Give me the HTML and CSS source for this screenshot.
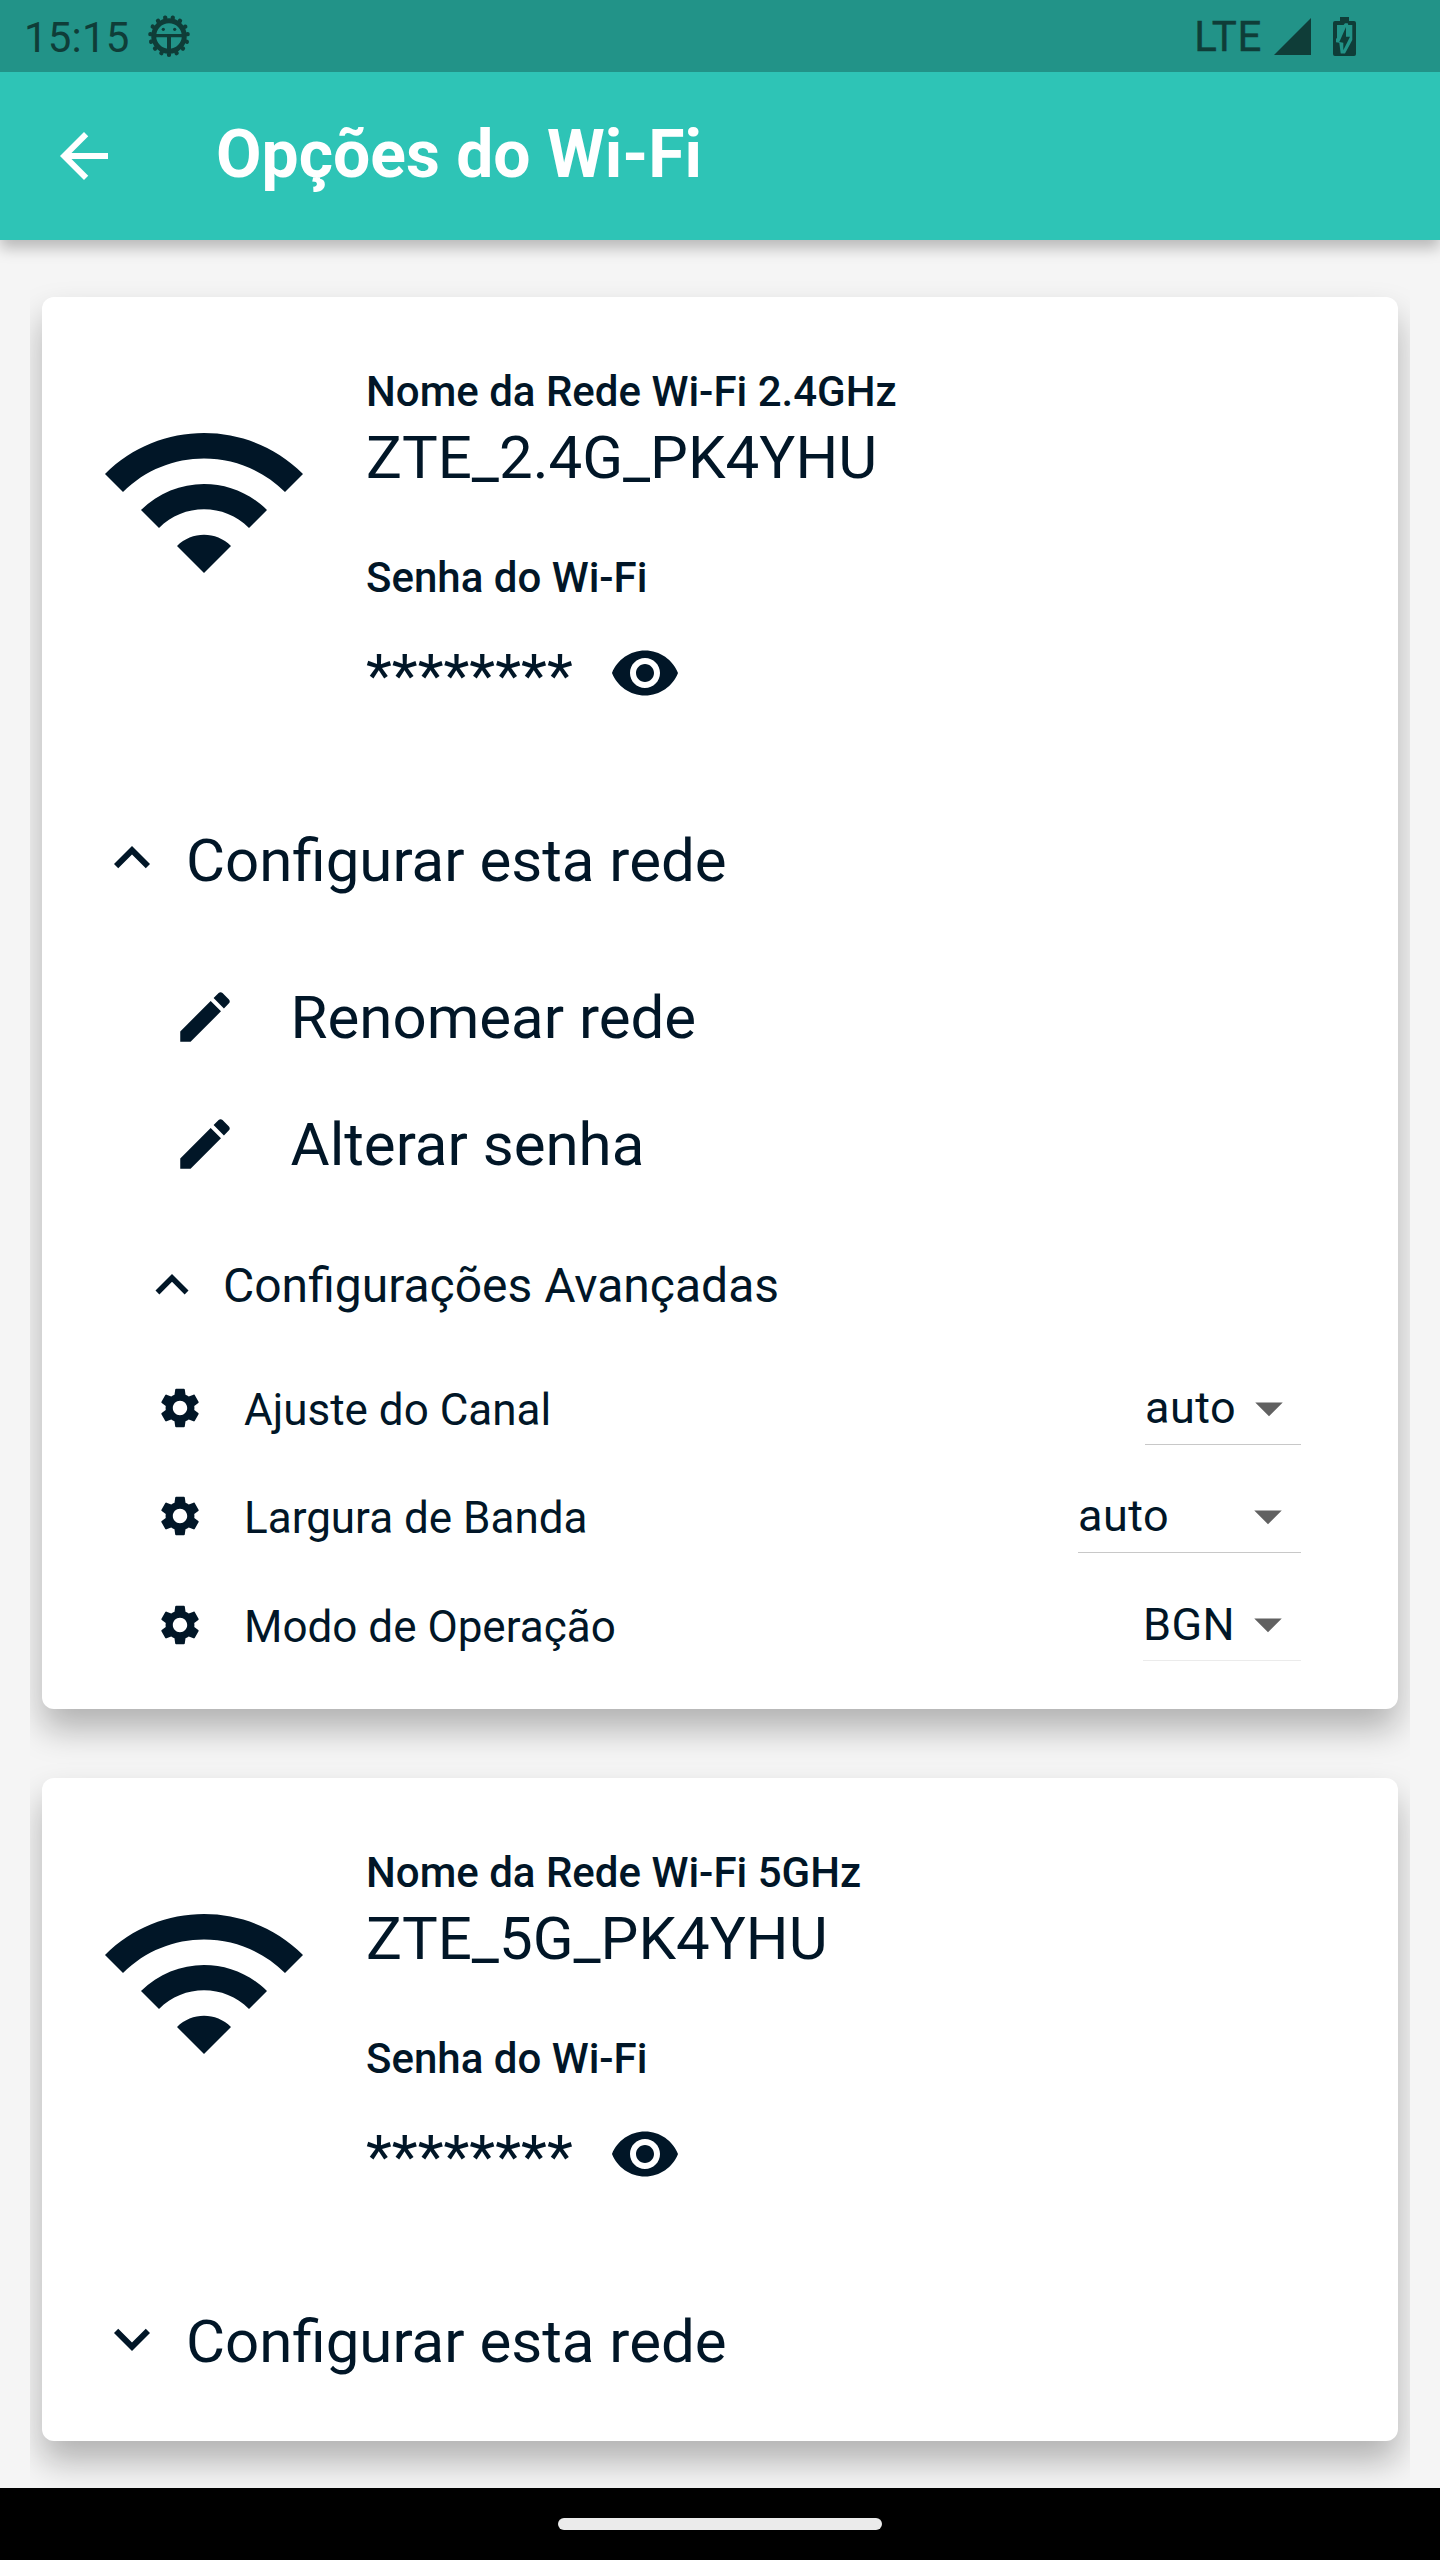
FILE: index.html
```html
<!DOCTYPE html>
<html lang="pt-BR">
<head>
<meta charset="utf-8">
<title>Opções do Wi-Fi</title>
<link rel="stylesheet" href="styles.css">
</head>
<body>
<svg class="sprite" aria-hidden="true">
  <symbol id="wifi" viewBox="0 0 24 24"><path d="M1 9l2 2c4.97-4.97 13.03-4.97 18 0l2-2C16.93 2.93 7.08 2.93 1 9zm8 8l3 3 3-3c-1.65-1.66-4.34-1.66-6 0zm-4-4l2 2c2.76-2.76 7.24-2.76 10 0l2-2C15.14 9.14 8.87 9.14 5 13z"/></symbol>
  <symbol id="eye" viewBox="0 0 24 24"><path d="M12 4.5C7 4.5 2.73 7.61 1 12c1.73 4.39 6 7.5 11 7.5s9.27-3.11 11-7.5c-1.73-4.39-6-7.5-11-7.5zM12 17c-2.76 0-5-2.24-5-5s2.24-5 5-5 5 2.24 5 5-2.24 5-5 5zm0-8c-1.66 0-3 1.34-3 3s1.34 3 3 3 3-1.34 3-3-1.34-3-3-3z"/></symbol>
  <symbol id="less" viewBox="0 0 24 24"><path d="M12 8l-6 6 1.41 1.41L12 10.83l4.59 4.58L18 14z"/></symbol>
  <symbol id="more" viewBox="0 0 24 24"><path d="M16.59 8.59L12 13.17 7.41 8.59 6 10l6 6 6-6z"/></symbol>
  <symbol id="edit" viewBox="0 0 24 24"><path d="M3 17.25V21h3.75L17.81 9.94l-3.75-3.75L3 17.25zM20.71 7.04c.39-.39.39-1.02 0-1.41l-2.34-2.34c-.39-.39-1.02-.39-1.41 0l-1.83 1.83 3.75 3.75 1.83-1.83z"/></symbol>
  <symbol id="gear" viewBox="0 0 24 24"><path d="M19.14 12.94c.04-.3.06-.61.06-.94 0-.32-.02-.64-.07-.94l2.03-1.58c.18-.14.23-.41.12-.61l-1.92-3.32c-.12-.22-.37-.29-.59-.22l-2.39.96c-.5-.38-1.03-.7-1.62-.94l-.36-2.54c-.04-.24-.24-.41-.48-.41h-3.84c-.24 0-.43.17-.47.41l-.36 2.54c-.59.24-1.13.57-1.62.94l-2.39-.96c-.22-.08-.47 0-.59.22L2.74 8.87c-.12.21-.08.47.12.61l2.03 1.58c-.05.3-.09.63-.09.94s.02.64.07.94l-2.03 1.58c-.18.14-.23.41-.12.61l1.92 3.32c.12.22.37.29.59.22l2.39-.96c.5.38 1.03.7 1.62.94l.36 2.54c.05.24.24.41.48.41h3.84c.24 0 .44-.17.47-.41l.36-2.54c.59-.24 1.13-.56 1.62-.94l2.39.96c.22.08.47 0 .59-.22l1.92-3.32c.12-.22.07-.47-.12-.61l-2.01-1.58zM12 15.6c-1.98 0-3.6-1.62-3.6-3.6s1.62-3.6 3.6-3.6 3.6 1.62 3.6 3.6-1.62 3.6-3.6 3.6z"/></symbol>
  <symbol id="drop" viewBox="0 0 24 24"><path d="M7 10l5 5 5-5z"/></symbol>
</svg>
<div class="screen">
  <header class="status-bar">
    <span class="clock">15:15</span>
    <svg class="bug" viewBox="0 0 42 42"><g fill="none" stroke="currentColor"><circle cx="21" cy="21" r="15.3" stroke-width="5"/><circle cx="21" cy="21" r="18.7" stroke-width="4.4" stroke-linecap="round" pathLength="150" stroke-dasharray=".01 9.99" transform="rotate(90 21 21)"/></g><path d="M6 19h30v3.3H23V36h-4V22.3H6z"/><circle cx="15.3" cy="14.3" r="1.6"/><circle cx="26.7" cy="14.3" r="1.6"/></svg>
    <span class="network">LTE</span>
    <svg class="signal" viewBox="0 0 37 37"><path d="M37 0v37H0z"/></svg>
    <svg class="battery" viewBox="0 0 23 39"><path fill-rule="evenodd" d="M7 0h9v4h5a2 2 0 0 1 2 2v31a2 2 0 0 1-2 2H2a2 2 0 0 1-2-2V6a2 2 0 0 1 2-2h5zM4 8v12.7L3 22v3.3l3.3.4 1.4 10.8H12L19.3 23V8h-4l-.6-1.7H12L10.6 8zM13 10v9.7h4l-6.7 13.6v-7.6l-4-.7z"/></svg>
  </header>
  <div class="app-bar">
    <svg class="back" viewBox="0 0 24 24"><path d="M20 11H7.83l5.59-5.59L12 4l-8 8 8 8 1.41-1.41L7.83 13H20v-2z"/></svg>
    <h1 class="title">Opções do Wi-Fi</h1>
  </div>
  <main class="list">
    <section class="card card-open">
      <div class="network-info">
        <svg class="wifi"><use href="#wifi"/></svg>
        <div class="details">
          <div class="label">Nome da Rede Wi-Fi 2.4GHz</div>
          <div class="value">ZTE_2.4G_PK4YHU</div>
          <div class="label label-password">Senha do Wi-Fi</div>
          <div class="password"><span class="mask">********</span><svg class="icon-72"><use href="#eye"/></svg></div>
        </div>
      </div>
      <div class="expander"><svg class="icon-72"><use href="#less"/></svg><span>Configurar esta rede</span></div>
      <div class="action"><svg class="icon-66"><use href="#edit"/></svg><span>Renomear rede</span></div>
      <div class="action"><svg class="icon-66"><use href="#edit"/></svg><span>Alterar senha</span></div>
      <div class="advanced"><svg class="icon-66"><use href="#less"/></svg><span>Configurações Avançadas</span></div>
      <div class="settings">
        <div class="setting"><svg class="icon-48"><use href="#gear"/></svg><span class="setting-name">Ajuste do Canal</span><div class="select select-channel"><span>auto</span><svg class="icon-66"><use href="#drop"/></svg></div></div>
        <div class="setting"><svg class="icon-48"><use href="#gear"/></svg><span class="setting-name">Largura de Banda</span><div class="select select-band"><span>auto</span><svg class="icon-66"><use href="#drop"/></svg></div></div>
        <div class="setting"><svg class="icon-48"><use href="#gear"/></svg><span class="setting-name">Modo de Operação</span><div class="select select-mode"><span>BGN</span><svg class="icon-66"><use href="#drop"/></svg></div></div>
      </div>
    </section>
    <section class="card card-closed">
      <div class="network-info">
        <svg class="wifi"><use href="#wifi"/></svg>
        <div class="details">
          <div class="label">Nome da Rede Wi-Fi 5GHz</div>
          <div class="value">ZTE_5G_PK4YHU</div>
          <div class="label label-password">Senha do Wi-Fi</div>
          <div class="password"><span class="mask">********</span><svg class="icon-72"><use href="#eye"/></svg></div>
        </div>
      </div>
      <div class="expander"><svg class="icon-72"><use href="#more"/></svg><span>Configurar esta rede</span></div>
    </section>
  </main>
  <footer class="nav-bar"><div class="handle"></div></footer>
</div>
</body>
</html>
```
FILE: styles.css
```css
* { box-sizing: border-box; }
body { margin: 0; background: #f5f5f5; color: #011627; font-family: Roboto, "Liberation Sans", sans-serif; }
svg { display: block; flex: none; fill: currentColor; }
.sprite { position: absolute; width: 0; height: 0; }
.screen { display: flex; flex-direction: column; width: 1440px; height: 2560px; overflow: hidden; }

.status-bar { display: flex; align-items: center; flex: none; height: 72px; padding: 0 84px 0 24px; background: #229388; color: #0f3d38; font-size: 42px; z-index: 2; }
.clock { padding-top: 3px; letter-spacing: .2px; }
.bug { width: 42px; height: 42px; margin-left: 18px; overflow: visible; }
.network { margin-left: auto; letter-spacing: .6px; -webkit-text-stroke: .4px currentColor; }
.signal { width: 37px; height: 37px; margin-left: 12px; }
.battery { width: 23px; height: 39px; margin-left: 22px; }

.app-bar { display: flex; align-items: center; flex: none; height: 168px; padding: 0 48px; background: #2ec4b6; color: #fff; box-shadow: 0 8px 14px rgba(0,0,0,.25); z-index: 1; }
.back { width: 72px; height: 72px; }
.title { margin: 0 0 2px 96px; font-size: 66px; font-weight: 700; line-height: 78px; }

.list { flex: 1; min-height: 0; margin: 0 30px; padding: 57px 12px 0; overflow: hidden; }
.card { padding: 0 54px; border-radius: 12px; background: #fff; box-shadow: 0 20px 34px rgba(0,0,0,.28); }
.card-open { height: 1412px; }
.card-closed { height: 663px; margin-top: 69px; }

.network-info { display: flex; height: 507px; padding-top: 70px; }
.wifi { width: 216px; height: 216px; margin-top: 26px; }
.details { margin-left: 54px; }
.label { font-size: 42px; font-weight: 500; line-height: 50px; }
.value { margin-top: 6px; font-size: 60px; line-height: 70px; }
.label-password { margin-top: 60px; }
.password { display: flex; align-items: center; height: 72px; margin-top: 34px; }
.mask { padding-top: 5px; font-size: 60px; line-height: 70px; }
.password .icon-72 { margin-left: 36px; }

.icon-72 { width: 72px; height: 72px; }
.icon-66 { width: 66px; height: 66px; }
.icon-48 { width: 48px; height: 48px; }

.expander { display: flex; align-items: center; height: 108px; gap: 18px; font-size: 60px; line-height: 72px; }
.expander span { padding-top: 5px; }
.action { display: flex; align-items: center; height: 127px; padding-left: 75.5px; gap: 53px; font-size: 60px; }
.action span { padding-top: 2px; }
.expander + .action { margin-top: 41px; }
.advanced { display: flex; align-items: center; height: 126px; margin-top: 15px; padding-left: 43px; gap: 18px; font-size: 48px; }
.settings { padding-top: 6px; }
.setting { display: flex; align-items: center; height: 108.3px; padding: 0 43px 0 60px; font-size: 44px; }
.setting-name { margin-left: 40px; padding-top: 4px; }
.select { display: flex; align-items: center; justify-content: space-between; height: 73px; margin-left: auto; border-bottom: 1px solid #c8c8c8; font-size: 45px; letter-spacing: .45px; }
.select svg { color: #616161; }
.select-channel { width: 156px; }
.select-band { width: 223px; }
.select-mode { width: 158px; border-bottom-color: #ebebeb; }

.nav-bar { display: flex; align-items: center; justify-content: center; flex: none; height: 72px; background: #000; z-index: 1; }
.handle { width: 324px; height: 12px; border-radius: 6px; background: #ebebeb; }
```
